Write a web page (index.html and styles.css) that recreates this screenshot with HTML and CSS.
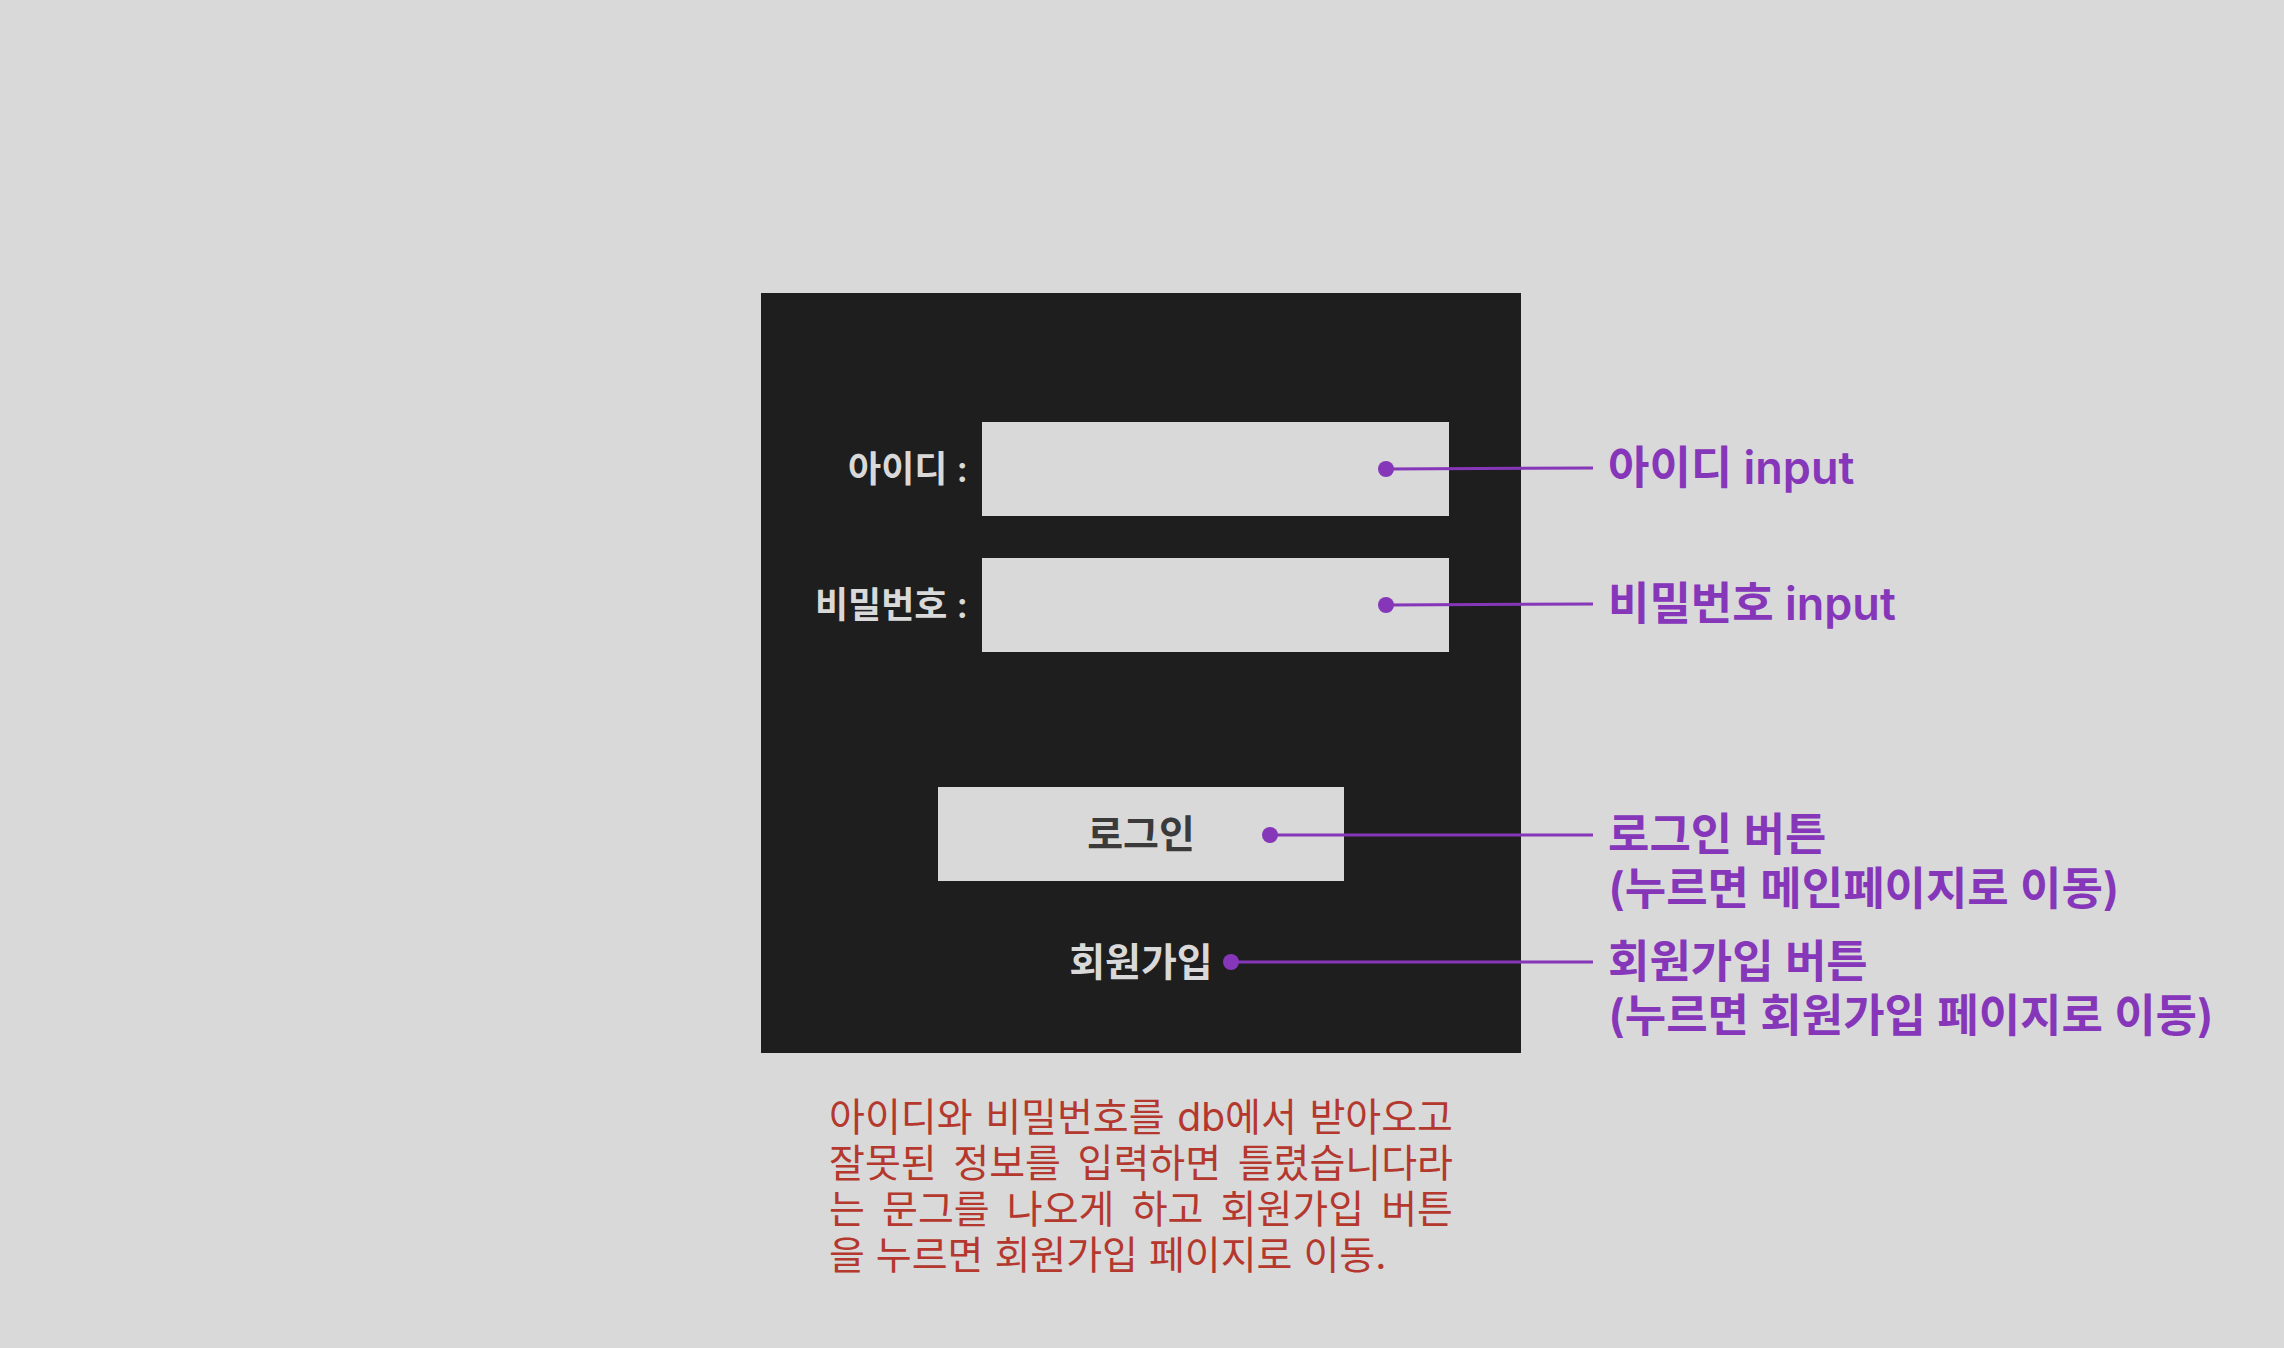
FILE: index.html
```html
<!DOCTYPE html>
<html lang="ko">
<head>
  <meta charset="utf-8">
  <meta name="viewport" content="width=device-width, initial-scale=1">
  <title>로그인</title>
  <link rel="stylesheet" href="styles.css">
</head>
<body>
  <main class="board">
    <form class="card">
      <div class="fields">
        <label class="label" for="user-id">아이디 :</label>
        <input class="field" id="user-id" type="text" autocomplete="username">
        <label class="label" for="user-pw">비밀번호 :</label>
        <input class="field" id="user-pw" type="password" autocomplete="current-password">
      </div>
      <button class="login" type="button">로그인</button>
      <a class="signup" href="#signup">회원가입</a>
    </form>

    <aside class="notes">
      <p class="note note-id">
        <svg class="connector" width="240" height="20" viewBox="0 0 240 20" aria-hidden="true"><circle cx="18" cy="11" r="8"/><path d="M18 11 L225 10"/></svg>
        아이디 input
      </p>
      <p class="note note-pw">
        <svg class="connector" width="240" height="20" viewBox="0 0 240 20" aria-hidden="true"><circle cx="18" cy="11" r="8"/><path d="M18 11 L225 10"/></svg>
        비밀번호 input
      </p>
      <p class="note note-login">
        <svg class="connector" width="360" height="20" viewBox="0 0 360 20" aria-hidden="true"><circle cx="22" cy="10" r="8"/><path d="M22 10 H345"/></svg>
        로그인 버튼<br>(누르면 메인페이지로 이동)
      </p>
      <p class="note note-signup">
        <svg class="connector" width="400" height="20" viewBox="0 0 400 20" aria-hidden="true"><circle cx="23" cy="10" r="8"/><path d="M23 10 H385"/></svg>
        회원가입 버튼<br>(누르면 회원가입 페이지로 이동)
      </p>
    </aside>

    <p class="summary">아이디와 비밀번호를 db에서 받아오고 잘못된 정보를 입력하면 틀렸습니다라는 문그를 나오게 하고 회원가입 버튼을 누르면 회원가입 페이지로 이동.</p>
  </main>
</body>
</html>
```
FILE: styles.css
```css
:root {
  --paper: #d9d9d9;
  --ink: #1e1e1e;
  --accent: #8636b9;
  --warn: #b4382e;
}

* {
  box-sizing: border-box;
}

body {
  margin: 0;
  background: var(--paper);
  font-family: Inter, "Noto Sans CJK KR", sans-serif;
}

.board {
  display: grid;
  grid-template-columns: 1fr 760px 1fr;
  row-gap: 41px;
  padding: 293px 2px 0 0;
}

.card {
  grid-column: 2;
  display: flex;
  flex-direction: column;
  align-items: center;
  padding: 129px 0 68px;
  background: var(--ink);
}

.fields {
  align-self: stretch;
  display: grid;
  grid-template-columns: 1fr 467px;
  gap: 42px 14px;
  align-items: center;
  padding-right: 72px;
}

.label {
  color: var(--paper);
  font-size: 36px;
  font-weight: 600;
  line-height: 44px;
  text-align: right;
}

.field {
  width: 100%;
  height: 94px;
  padding: 0 24px;
  border: 0;
  border-radius: 0;
  background: var(--paper);
  font: inherit;
  font-size: 36px;
}

.login {
  width: 406px;
  height: 94px;
  margin-top: 135px;
  padding: 0;
  border: 0;
  background: var(--paper);
  color: #3a3a3a;
  font: inherit;
  font-size: 39px;
  font-weight: 600;
  line-height: 46px;
}

.signup {
  margin-top: 58px;
  color: var(--paper);
  font-size: 39px;
  font-weight: 600;
  line-height: 46px;
  text-decoration: none;
}

.notes {
  grid-column: 3;
  padding: 148px 0 0 87px;
}

.note {
  position: relative;
  margin: 0;
  color: var(--accent);
  font-size: 45px;
  font-weight: 600;
  line-height: 54px;
  white-space: nowrap;
}

.note-pw {
  margin-top: 82px;
}

.note-login {
  margin-top: 177px;
}

.note-signup {
  margin-top: 19px;
}

/* Leader line running from a note back to the control it describes */
.connector {
  position: absolute;
  top: 17px;
  right: 100%;
  fill: var(--accent);
  stroke: none;
}

.connector path {
  fill: none;
  stroke: var(--accent);
  stroke-width: 3;
}

.summary {
  grid-column: 2;
  justify-self: center;
  width: 624px;
  margin: 0;
  color: var(--warn);
  font-size: 39px;
  line-height: 46px;
  text-align: justify;
}
```
